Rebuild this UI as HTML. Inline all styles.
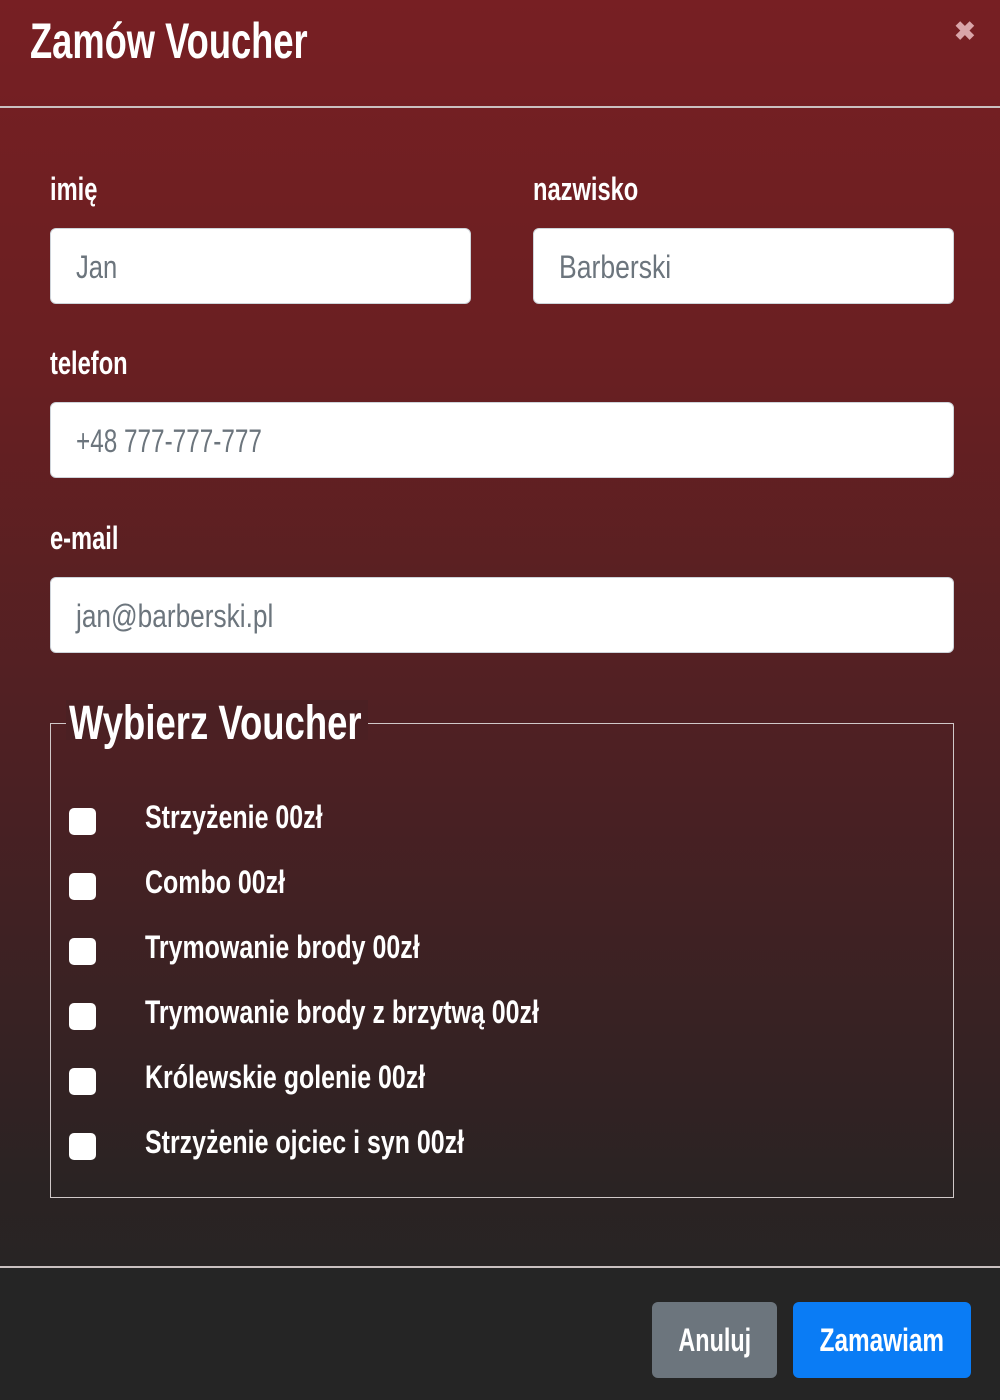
<!DOCTYPE html>
<html><head><meta charset="utf-8"><style>
*{margin:0;padding:0;box-sizing:border-box}
body{width:1000px;height:1400px;overflow:hidden;font-family:"Liberation Sans Narrow","Liberation Sans",sans-serif;font-weight:bold;color:#fff;background:linear-gradient(180deg,#771f23 0%,#6a1f22 25%,#4c2023 55%,#2a2323 85%,#252525 100%);position:relative}
.a{position:absolute;white-space:nowrap}
.t{transform-origin:left center;transform:scaleX(.78)}
.line{position:absolute;left:0;width:1000px;height:2px;background:#c9c0c0}
.inp{position:absolute;background:#fff;border:1px solid #ced4da;border-radius:6px;height:76px}
.inp span{position:absolute;left:25px;top:20px;font-size:32px;color:#6c757d;font-weight:normal;transform-origin:left center;transform:scaleX(.8)}
.lab{font-size:32px;transform:scaleX(.74)!important;margin-top:3px}
.cb{position:absolute;left:69px;width:27px;height:27px;background:#fff;border-radius:5px}
.it{position:absolute;left:145px;font-size:32px;margin-top:2px}
.btn{position:absolute;top:1302px;height:76px;border-radius:6px;font-size:32px;text-align:center;line-height:76px}
</style></head><body>
<div class="a t" style="left:30px;top:12px;font-size:50px;transform:scaleX(.726)">Zamów Voucher</div>
<div class="a" style="left:954px;top:16px;font-size:26px;color:#d9a5a9">✖</div>
<div class="line" style="top:106px"></div>
<div class="a t lab" style="left:50px;top:168px">imię</div>
<div class="a t lab" style="left:533px;top:168px">nazwisko</div>
<div class="inp" style="left:50px;top:228px;width:421px"><span>Jan</span></div>
<div class="inp" style="left:533px;top:228px;width:421px"><span style="transform:scaleX(.83)">Barberski</span></div>
<div class="a t lab" style="left:50px;top:342px">telefon</div>
<div class="inp" style="left:50px;top:402px;width:904px"><span style="transform:scaleX(.76)">+48 777-777-777</span></div>
<div class="a t lab" style="left:50px;top:517px">e-mail</div>
<div class="inp" style="left:50px;top:577px;width:904px"><span style="transform:scaleX(.82)">jan@barberski.pl</span></div>
<div style="position:absolute;left:50px;top:723px;width:904px;height:475px;border:1.5px solid #d0c8c8"></div>
<div class="a" style="left:66px;top:700px;width:302px;height:40px;background:#4b2023"></div>
<div class="a t" style="left:69px;top:696px;font-size:48px;transform:scaleX(.76)">Wybierz Voucher</div>
<div class="cb" style="top:808px"></div><div class="a t it" style="top:797px">Strzyżenie 00zł</div>
<div class="cb" style="top:873px"></div><div class="a t it" style="top:862px">Combo 00zł</div>
<div class="cb" style="top:938px"></div><div class="a t it" style="top:927px">Trymowanie brody 00zł</div>
<div class="cb" style="top:1003px"></div><div class="a t it" style="top:992px">Trymowanie brody z brzytwą 00zł</div>
<div class="cb" style="top:1068px"></div><div class="a t it" style="top:1057px">Królewskie golenie 00zł</div>
<div class="cb" style="top:1133px"></div><div class="a t it" style="top:1122px">Strzyżenie ojciec i syn 00zł</div>
<div style="position:absolute;left:0;top:1268px;width:1000px;height:132px;background:#252525"></div>
<div class="line" style="top:1266px"></div>
<div class="btn" style="left:652px;width:125px;background:#6c757d"><span style="display:inline-block;transform:scaleX(.73)">Anuluj</span></div>
<div class="btn" style="left:793px;width:178px;background:#0a7cf5"><span style="display:inline-block;transform:scaleX(.76)">Zamawiam</span></div>
</body></html>
